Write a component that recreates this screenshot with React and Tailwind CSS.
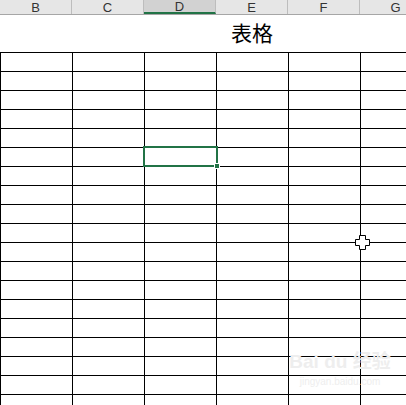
import React from 'react'

const cols = ['B', 'C', 'D', 'E', 'F', 'G']
const rows = Array.from({ length: 19 }, (_, i) => i)

function Cursor() {
    return (
        <svg width="15" height="15" viewBox="0 0 15 15" className="absolute left-[355px] top-[235px]">
            <path
                d="M4.5 0.5h6v4h4v6h-4v4h-6v-4h-4v-6h4z"
                fill="#fff"
                stroke="#000"
                strokeWidth="1"
            />
        </svg>
    )
}

export default function App() {
    return (
        <div className="relative w-[406px] h-[405px] overflow-hidden bg-white" style={{ fontFamily: '"Liberation Sans", Arial, sans-serif' }}>
            {/* column header */}
            <div className="flex h-[15px] bg-[#e6e6e6] border-b border-[#a6a6a6]">
                {cols.map((c) => (
                    <div
                        key={c}
                        className={
                            'shrink-0 w-[72px] border-r border-[#bdbdbd] flex items-center justify-center text-[13px] leading-none text-[#333] ' +
                            (c === 'D' ? 'bg-[#d2d2d2] border-b-2 border-b-[#217346] text-[#2b5f43]' : '')
                        }
                    >
                        {c}
                    </div>
                ))}
            </div>

            {/* title row */}
            <div className="flex h-[37px]">
                <div className="shrink-0 w-[144px]" />
                <div
                    className="shrink-0 w-[216px] flex items-center justify-center text-[21px] text-black pb-[1px]"
                    style={{ fontFamily: '"Noto Sans CJK SC", sans-serif' }}
                >
                    表格
                </div>
            </div>

            {/* grid */}
            <div className="border-t border-l border-black w-[433px]">
                {rows.map((r) => (
                    <div key={r} className="flex h-[19px]">
                        {cols.map((c) => (
                            <div key={c} className="shrink-0 w-[72px] h-[19px] border-r border-b border-black" />
                        ))}
                    </div>
                ))}
            </div>

            {/* selected cell D */}
            <div className="absolute left-[143px] top-[146px] w-[75px] h-[21px] border-2 border-[#217346]" />
            <div className="absolute left-[214px] top-[163px] w-[6px] h-[6px] bg-[#217346] border border-white" />

            {/* watermark */}
            <div className="absolute left-[290px] top-[352px] w-[100px] flex flex-col items-center text-[#eeeeee] leading-none whitespace-nowrap select-none">
                <div className="text-[19px] font-bold" style={{ fontFamily: '"Liberation Sans", "Noto Sans CJK SC", sans-serif' }}>Bai du 经验</div>
                <div className="text-[10px] mt-[6px]">jingyan.baidu.com</div>
            </div>

            <Cursor />
        </div>
    )
}
